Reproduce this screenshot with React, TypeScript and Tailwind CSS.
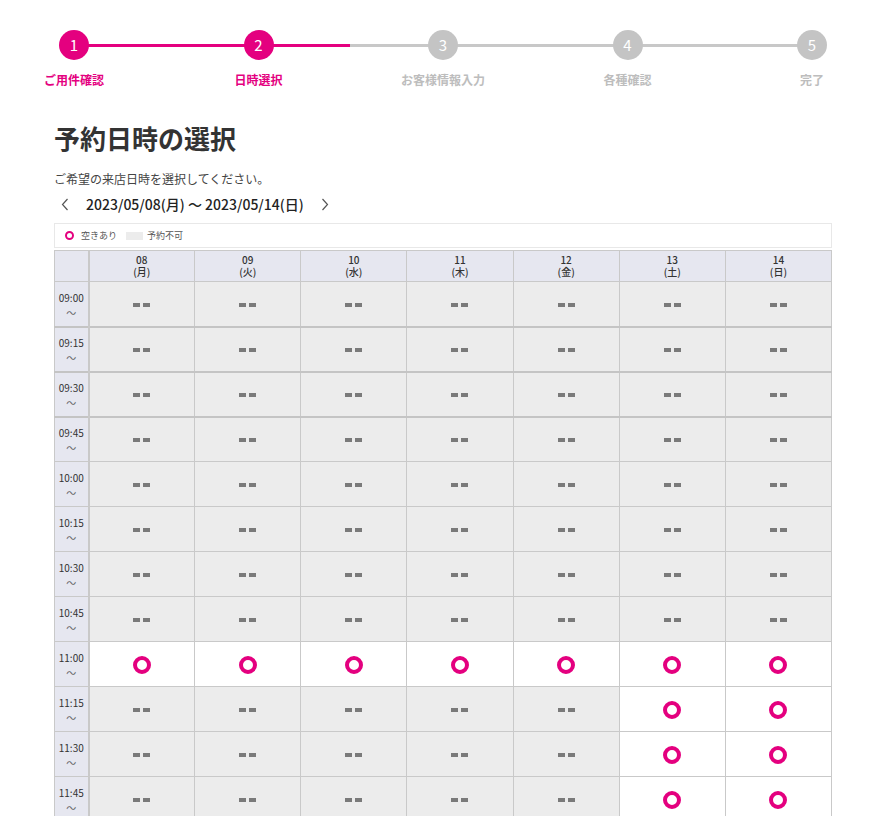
import React from 'react';

const steps = [
  { no: 1, label: 'ご用件確認', done: true },
  { no: 2, label: '日時選択', done: true },
  { no: 3, label: 'お客様情報入力', done: false },
  { no: 4, label: '各種確認', done: false },
  { no: 5, label: '完了', done: false },
];

const days = [
  { d: '08', w: '月' },
  { d: '09', w: '火' },
  { d: '10', w: '水' },
  { d: '11', w: '木' },
  { d: '12', w: '金' },
  { d: '13', w: '土' },
  { d: '14', w: '日' },
];

// which day columns are open for each slot
const slots: { time: string; open: number[]; thick?: boolean }[] = [
  { time: '09:00', open: [], thick: true },
  { time: '09:15', open: [], thick: true },
  { time: '09:30', open: [], thick: true },
  { time: '09:45', open: [] },
  { time: '10:00', open: [] },
  { time: '10:15', open: [] },
  { time: '10:30', open: [] },
  { time: '10:45', open: [] },
  { time: '11:00', open: [0, 1, 2, 3, 4, 5, 6] },
  { time: '11:15', open: [5, 6] },
  { time: '11:30', open: [5, 6] },
  { time: '11:45', open: [5, 6] },
  { time: '12:00', open: [5, 6] },
  { time: '12:15', open: [5, 6] },
];

const Ring = () => (
  <span className="inline-block w-[18px] h-[18px] rounded-full border-[4px] border-[#e4007f]" />
);

const Dash = () => (
  <span className="inline-flex items-center gap-[3px]">
    <span className="w-[7px] h-[4px] bg-[#7a7a7a]" />
    <span className="w-[7px] h-[4px] bg-[#7a7a7a]" />
  </span>
);

const Chevron = ({ dir }: { dir: 'left' | 'right' }) => (
  <svg width="8" height="13" viewBox="0 0 8 13" fill="none" stroke="#555" strokeWidth="1.2">
    {dir === 'left' ? <path d="M6.5 1 1.5 6.5 6.5 12" /> : <path d="M1.5 1 6.5 6.5 1.5 12" />}
  </svg>
);

export default function App() {
  return (
    <div
      className="min-h-screen bg-white text-[#333]"
      style={{ fontFamily: '"Noto Sans CJK JP", "Noto Sans", sans-serif' }}
    >
      {/* Stepper */}
      <div className="relative mx-[44px] w-[798px] pt-[30px]">
        <div className="absolute left-[30px] right-[30px] top-[44px] h-[3px] bg-[#c8c8c8]" />
        <div className="absolute left-[30px] w-[276px] top-[44px] h-[3px] bg-[#e4007f]" />
        <div className="relative flex justify-between">
          {steps.map((s) => (
            <div key={s.no} className="w-[60px] flex flex-col items-center">
              <div
                className={`w-[30px] h-[30px] rounded-full flex items-center justify-center text-white text-[15px] ${
                  s.done ? 'bg-[#e4007f]' : 'bg-[#c4c4c4]'
                }`}
              >
                {s.no}
              </div>
              <div
                className={`mt-[12px] whitespace-nowrap text-[12px] font-bold leading-[16px] ${
                  s.done ? 'text-[#e4007f]' : 'text-[#bdbdbd]'
                }`}
              >
                {s.label}
              </div>
            </div>
          ))}
        </div>
      </div>

      <div className="ml-[54px] w-[778px]">
        <h1 className="mt-[32px] text-[26px] font-bold leading-[36px] text-[#333]">予約日時の選択</h1>
        <p className="mt-[14px] text-[12px] leading-[18px] text-[#444]">ご希望の来店日時を選択してください。</p>

        {/* Week navigation */}
        <div className="mt-[4px] flex items-center h-[24px] text-[14px] font-medium text-[#222]">
          <span className="ml-[7px] flex"><Chevron dir="left" /></span>
          <span className="ml-[17px]">2023/05/08(月) 〜 2023/05/14(日)</span>
          <span className="ml-[17px] flex"><Chevron dir="right" /></span>
        </div>

        {/* Legend */}
        <div className="mt-[7px] h-[25px] border border-[#e8e8e8] flex items-center px-[10px] text-[9px] text-[#555]">
          <span className="inline-block w-[9px] h-[9px] rounded-full border-[2px] border-[#e4007f]" />
          <span className="ml-[7px]">空きあり</span>
          <span className="ml-[9px] inline-block w-[17px] h-[8px] bg-[#ececec]" />
          <span className="ml-[4px]">予約不可</span>
        </div>

        {/* Calendar */}
        <table className="mt-[2px] w-full table-fixed border-collapse">
          <colgroup>
            <col className="w-[34px]" />
            {days.map((d) => (
              <col key={d.d} />
            ))}
          </colgroup>
          <thead>
            <tr className="h-[31px] bg-[#e6e7f0]">
              <th className="border border-[#c9c9c9] border-r-2" />
              {days.map((d) => (
                <th key={d.d} className="border border-[#c9c9c9] p-0 text-[10px] font-medium leading-[12px] text-[#333]">
                  <div>{d.d}</div>
                  <div>({d.w})</div>
                </th>
              ))}
            </tr>
          </thead>
          <tbody>
            {slots.map((row) => (
              <tr
                key={row.time}
                className={`h-[45px] ${row.thick ? 'border-b-2 border-[#c4c4c4]' : ''}`}
              >
                <td className="border border-[#c9c9c9] border-r-2 bg-[#e6e7f0] p-0 pt-[2px] text-center text-[10px] leading-[15px] text-[#333]">
                  <div>{row.time}</div>
                  <div className="text-[#666]">～</div>
                </td>
                {days.map((d, i) => {
                  const open = row.open.includes(i);
                  return (
                    <td
                      key={d.d}
                      className={`border border-[#c9c9c9] p-0 text-center align-middle ${
                        open ? 'bg-white' : 'bg-[#ececec]'
                      }`}
                    >
                      <div className="flex items-center justify-center pt-[2px]">
                        {open ? <Ring /> : <Dash />}
                      </div>
                    </td>
                  );
                })}
              </tr>
            ))}
          </tbody>
        </table>
      </div>
    </div>
  );
}
